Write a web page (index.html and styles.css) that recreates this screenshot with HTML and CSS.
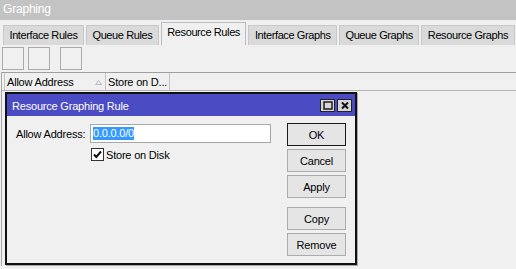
FILE: index.html
```html
<!DOCTYPE html>
<html lang="en">
<head>
    <meta charset="UTF-8">
    <title>Graphing</title>
    <link rel="stylesheet" href="styles.css">
</head>
<body>
    <div class="window">
        <div class="caption">Graphing</div>

        <div class="tabs">
            <div class="tab">Interface Rules</div>
            <div class="tab">Queue Rules</div>
            <div class="tab active">Resource Rules</div>
            <div class="tab">Interface Graphs</div>
            <div class="tab">Queue Graphs</div>
            <div class="tab">Resource Graphs</div>
        </div>

        <div class="toolbar">
            <button class="tool"></button>
            <button class="tool"></button>
            <button class="tool sep"></button>
        </div>

        <div class="list">
            <div class="list-head">
                <div class="col col-addr">
                    Allow Address
                    <svg class="sort" width="7" height="5" viewBox="0 0 7 5"><path d="M3.5 0.5 L6.5 4.5 L0.5 4.5 Z" fill="none" stroke="#b8b8b8"/></svg>
                </div>
                <div class="col col-disk">Store on D...</div>
            </div>
        </div>

        <div class="dialog">
            <div class="dlg-title">
                <span>Resource Graphing Rule</span>
                <div class="dlg-ctrls">
                    <span class="ctrl">
                        <svg width="10" height="9" viewBox="0 0 10 9"><rect x="1" y="1" width="8" height="7" fill="none" stroke="#111" stroke-width="1.4"/></svg>
                    </span>
                    <span class="ctrl">
                        <svg width="10" height="9" viewBox="0 0 10 9"><path d="M2 1.5 L8 7.5 M8 1.5 L2 7.5" stroke="#111" stroke-width="2"/></svg>
                    </span>
                </div>
            </div>

            <div class="dlg-body">
                <div class="form">
                    <div class="row">
                        <label class="label">Allow Address:</label>
                        <div class="input"><span class="sel">0.0.0.0/0</span></div>
                    </div>
                    <div class="row check-row">
                        <span class="check">
                            <svg width="11" height="11" viewBox="0 0 11 11"><path d="M2 5.5 L4.3 8 L9 2.5" fill="none" stroke="#111" stroke-width="2"/></svg>
                        </span>
                        <span>Store on Disk</span>
                    </div>
                </div>
                <div class="buttons">
                    <button class="btn default">OK</button>
                    <button class="btn">Cancel</button>
                    <button class="btn">Apply</button>
                    <button class="btn gap">Copy</button>
                    <button class="btn">Remove</button>
                </div>
            </div>
        </div>
    </div>
</body>
</html>
```

FILE: styles.css
```css
body {
    margin: 0;
    font-family: "Liberation Sans", Arial, sans-serif;
    font-size: 11px;
    letter-spacing: -0.2px;
    color: #000;
    background-color: #f0f0f0;
    width: 516px;
    height: 269px;
    overflow: hidden;
}
.window {
    position: relative;
    height: 269px;
}
.caption {
    height: 20px;
    line-height: 19px;
    padding-left: 3px;
    background-color: #c3c3c3;
    color: #fff;
    font-size: 12px;
}
.tabs {
    display: flex;
    align-items: flex-end;
    gap: 2px;
    height: 25px;
    padding-left: 3px;
    box-sizing: border-box;
    white-space: nowrap;
    letter-spacing: -0.4px;
}
.tab {
    flex-shrink: 0;
    height: 19px;
    line-height: 19px;
    padding: 0 5.5px;
    background-color: #dadada;
    border: 1px solid #c8c8c8;
    border-bottom: none;
}
.tab.active {
    height: 22px;
    line-height: 19px;
    background-color: #f0f0f0;
    border-color: #bdbdbd;
}
.toolbar {
    display: flex;
    gap: 4px;
    height: 27px;
    padding: 2px 0 0 2px;
    box-sizing: border-box;
}
.tool {
    width: 22px;
    height: 23px;
    padding: 0;
    border: 1px solid #ababab;
    background-color: #f0f0f0;
}
.tool.sep {
    margin-left: 6px;
}
.list {
    margin-left: 1px;
    height: 193px;
    border-top: 1px solid #a0a0a0;
    border-left: 1px solid #a8a8a8;
}
.list-head {
    display: flex;
    height: 17px;
    padding-left: 2px;
    border-bottom: 1px solid #b4b4b4;
    white-space: nowrap;
}
.col {
    position: relative;
    line-height: 18px;
    padding-left: 2px;
    border-left: 1px solid #c4c4c4;
    box-sizing: border-box;
}
.col-addr {
    width: 101px;
}
.col-disk {
    width: 65px;
    border-right: 1px solid #c4c4c4;
}
.sort {
    position: absolute;
    left: 90px;
    top: 7px;
}
.dialog {
    position: absolute;
    left: 5px;
    top: 92px;
    width: 352px;
    height: 173px;
    box-sizing: border-box;
    border: 2px solid #111;
    background-color: #f0f0f0;
    box-shadow: 1px 1px 0 #a8a8a8;
}
.dlg-title {
    display: flex;
    align-items: center;
    justify-content: space-between;
    height: 22px;
    padding: 1px 3px 0 5px;
    box-sizing: border-box;
    background-color: #4b4bc4;
    color: #fff;
}
.dlg-ctrls {
    display: flex;
    gap: 2px;
}
.ctrl {
    display: flex;
    align-items: center;
    justify-content: center;
    width: 13px;
    height: 11px;
    border: 1px solid #222;
    background-color: #d6d6d6;
}
.dlg-body {
    display: flex;
    padding: 7px 9px 0 9px;
}
.form {
    flex: 1;
}
.row {
    display: flex;
    align-items: center;
    margin-top: 1px;
    height: 19px;
}
.label {
    width: 74px;
}
.input {
    width: 181px;
    height: 19px;
    box-sizing: border-box;
    padding: 2px 0 0 2px;
    border: 1px solid #a8a8a8;
    background-color: #fff;
}
.sel {
    display: inline-block;
    line-height: 13px;
    background-color: #3399ff;
    color: #fff;
}
.check-row {
    margin-top: 5px;
    height: 13px;
    padding-left: 75px;
    gap: 2px;
}
.check {
    display: flex;
    align-items: center;
    justify-content: center;
    width: 13px;
    height: 13px;
    box-sizing: border-box;
    border: 1px solid #333;
    background-color: #fff;
}
.buttons {
    display: flex;
    flex-direction: column;
    width: 59px;
}
.btn {
    height: 23px;
    margin-bottom: 3px;
    padding: 0;
    font: inherit;
    letter-spacing: inherit;
    color: #000;
    border: 1px solid #acacac;
    background-color: #e5e5e5;
}
.btn.default {
    border-color: #1a1a1a;
}
.btn.gap {
    margin-top: 6px;
}
```
